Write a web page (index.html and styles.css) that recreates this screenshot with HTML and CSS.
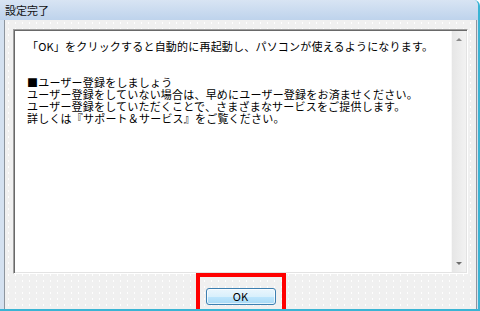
FILE: index.html
```html
<!DOCTYPE html>
<html lang="ja">
<head>
  <meta charset="UTF-8">
  <title>設定完了</title>
  <link rel="stylesheet" href="styles.css">
</head>
<body>
  <div class="window">
    <div class="titlebar">設定完了</div>

    <div class="client">
      <div class="textbox">
        <div class="message">
          <p>「OK」をクリックすると自動的に再起動し、パソコンが使えるようになります。</p>
          <p class="section">■ユーザー登録をしましょう<br>
            ユーザー登録をしていない場合は、早めにユーザー登録をお済ませください。<br>
            ユーザー登録をしていただくことで、さまざまなサービスをご提供します。<br>
            詳しくは『サポート＆サービス』をご覧ください。</p>
        </div>
        <div class="scrollbar">
          <span class="scroll-btn"><span class="arrow up"></span></span>
          <span class="scroll-btn"><span class="arrow down"></span></span>
        </div>
      </div>

      <div class="footer">
        <div class="highlight">
          <button class="ok-btn">OK</button>
        </div>
      </div>
    </div>
  </div>
</body>
</html>
```

FILE: styles.css
```css
body {
  margin: 0;
  font-family: "Noto Sans CJK JP", "Noto Sans", sans-serif;
  color: #000;
}

.window {
  width: 480px;
  height: 311px;
  box-sizing: border-box;
  display: flex;
  flex-direction: column;
  background: #d4e1f0;
  border-right: 2px solid #3ab4d4;
  border-bottom: 2px solid #3ab4d4;
  border-top-right-radius: 6px;
  overflow: hidden;
}

/* title bar */
.titlebar {
  height: 20px;
  padding-left: 5px;
  font-size: 11px;
  line-height: 20px;
  background: linear-gradient(#d8e4f3, #bed3ec);
  color: #111;
}

/* client area */
.client {
  flex: 1;
  display: flex;
  flex-direction: column;
  margin: 0 1px 0 4px;
  padding: 9px 8px 0 8px;
  background-color: #f0f0f0;
  background-image: radial-gradient(circle, rgba(255, 255, 255, 0.9) 0.6px, transparent 0.8px);
  background-size: 7px 6px;
  border-left: 1px solid #8d959e;
  border-right: 1px solid #8d959e;
}

.textbox {
  height: 245px;
  box-sizing: border-box;
  display: flex;
  background: #fff;
  border: 1px solid;
  border-color: #a0a0a0 #fff #fff #a0a0a0;
  padding: 1px;
  box-shadow: inset 1px 1px 0 #696969, inset -1px -1px 0 #e3e3e3;
}

.message {
  flex: 1;
  padding: 9px 12px;
  font-size: 11px;
  line-height: 12px;
  letter-spacing: 0.2px;
}

.message p {
  margin: 0;
}

.message .section {
  margin-top: 24px;
}

.scrollbar {
  width: 14px;
  display: flex;
  flex-direction: column;
  justify-content: space-between;
  background: linear-gradient(90deg, #e6e6e6, #f2f2f2);
  border-left: 1px solid #f8f8f8;
}

.scroll-btn {
  height: 17px;
  display: flex;
  align-items: center;
  justify-content: center;
}

.arrow {
  width: 0;
  height: 0;
  border-left: 3px solid transparent;
  border-right: 3px solid transparent;
}

.arrow.up {
  border-bottom: 3px solid #8a8a8a;
}

.arrow.down {
  border-top: 3px solid #6e6e6e;
}

/* button row */
.footer {
  display: flex;
  justify-content: center;
  margin-top: -1px;
}

.highlight {
  border: 4px solid #ff0000;
  padding: 5px 6px 4px 6px;
}

.ok-btn {
  width: 70px;
  height: 17px;
  padding: 0;
  border: 1px solid #3c7fb1;
  border-radius: 3px;
  background: linear-gradient(#eaf6fd 0%, #d9f0fc 50%, #bee6fd 51%, #a7d9f5 100%);
  box-shadow: inset 0 0 0 1px rgba(255, 255, 255, 0.7);
  font-family: "Noto Sans CJK JP", "Noto Sans", sans-serif;
  font-size: 11px;
  line-height: 15px;
  color: #000;
  -webkit-appearance: none;
  appearance: none;
}
```
